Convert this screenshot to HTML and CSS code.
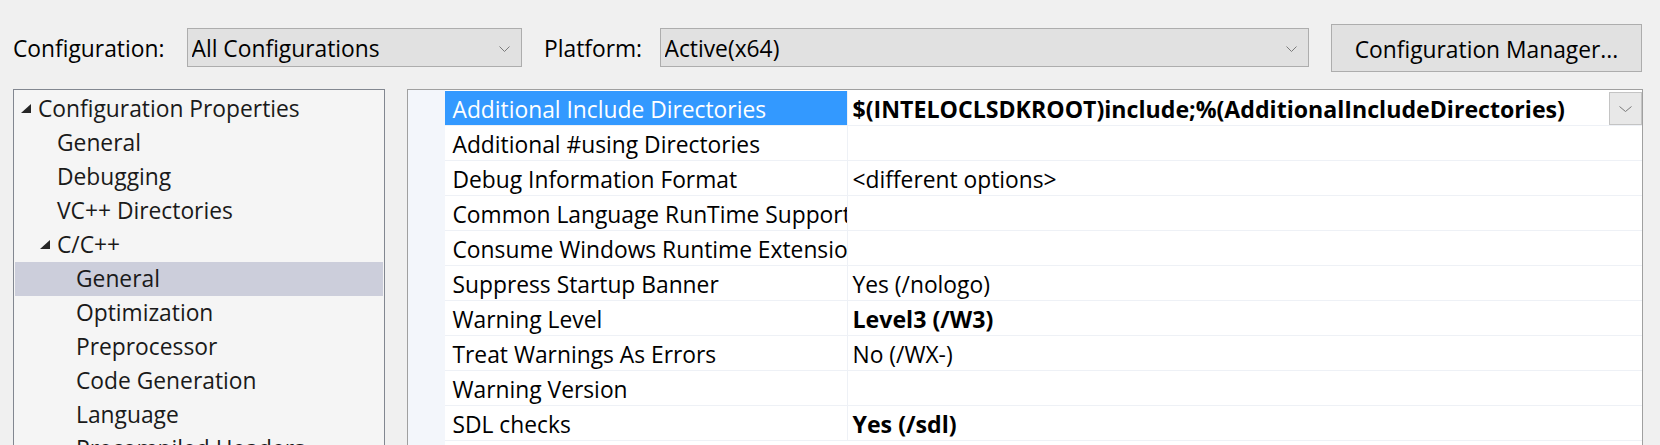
FILE: index.html
```html
<!DOCTYPE html>
<html lang="en">
<head>
<meta charset="utf-8">
<title>Property Pages</title>
<link rel="stylesheet" href="styles.css">
</head>
<body>
<div class="dialog">
  <div class="topbar">
    <span class="lbl lbl-config">Configuration:</span>
    <div class="combo combo-config">
      <span class="combo-text">All Configurations</span>
      <svg class="chev" width="11" height="6" viewBox="0 0 11 6"><polyline points="0.5,0.5 5.5,5.5 10.5,0.5" fill="none" stroke="#7a7a7a" stroke-width="1"/></svg>
    </div>
    <span class="lbl lbl-plat">Platform:</span>
    <div class="combo combo-plat">
      <span class="combo-text">Active(x64)</span>
      <svg class="chev" width="11" height="6" viewBox="0 0 11 6"><polyline points="0.5,0.5 5.5,5.5 10.5,0.5" fill="none" stroke="#7a7a7a" stroke-width="1"/></svg>
    </div>
    <button class="btn">Configuration Manager...</button>
  </div>

  <div class="panels">
    <div class="tree">
      <div class="node l0"><span class="exp"><svg class="tri" width="10" height="9" viewBox="0 0 10 9"><polygon points="0,9 10,9 10,0" fill="#262626"/></svg></span>Configuration Properties</div>
      <div class="node l1"><span class="exp"></span>General</div>
      <div class="node l1"><span class="exp"></span>Debugging</div>
      <div class="node l1"><span class="exp"></span>VC++ Directories</div>
      <div class="node l1"><span class="exp"><svg class="tri" width="10" height="9" viewBox="0 0 10 9"><polygon points="0,9 10,9 10,0" fill="#262626"/></svg></span>C/C++</div>
      <div class="node l2 selected"><span class="exp"></span>General</div>
      <div class="node l2"><span class="exp"></span>Optimization</div>
      <div class="node l2"><span class="exp"></span>Preprocessor</div>
      <div class="node l2"><span class="exp"></span>Code Generation</div>
      <div class="node l2"><span class="exp"></span>Language</div>
      <div class="node l2"><span class="exp"></span>Precompiled Headers</div>
    </div>

    <div class="grid">
      <div class="gutter"></div>
      <div class="rows">
        <div class="row selected">
          <div class="name">Additional Include Directories</div>
          <div class="val">
            <span class="val-text bold">$(INTELOCLSDKROOT)include;%(AdditionalIncludeDirectories)</span>
            <span class="ddbtn"><svg width="13" height="6" viewBox="0 0 13 6"><polyline points="0.5,0.5 6.5,5.5 12.5,0.5" fill="none" stroke="#7a7a7a" stroke-width="1"/></svg></span>
          </div>
        </div>
        <div class="row"><div class="name">Additional #using Directories</div><div class="val"><span class="val-text"></span></div></div>
        <div class="row"><div class="name">Debug Information Format</div><div class="val"><span class="val-text">&lt;different options&gt;</span></div></div>
        <div class="row"><div class="name">Common Language RunTime Support</div><div class="val"><span class="val-text"></span></div></div>
        <div class="row"><div class="name">Consume Windows Runtime Extension</div><div class="val"><span class="val-text"></span></div></div>
        <div class="row"><div class="name">Suppress Startup Banner</div><div class="val"><span class="val-text">Yes (/nologo)</span></div></div>
        <div class="row"><div class="name">Warning Level</div><div class="val"><span class="val-text bold">Level3 (/W3)</span></div></div>
        <div class="row"><div class="name">Treat Warnings As Errors</div><div class="val"><span class="val-text">No (/WX-)</span></div></div>
        <div class="row"><div class="name">Warning Version</div><div class="val"><span class="val-text"></span></div></div>
        <div class="row"><div class="name">SDL checks</div><div class="val"><span class="val-text bold">Yes (/sdl)</span></div></div>
      </div>
    </div>
  </div>
</div>
</body>
</html>
```
FILE: styles.css
```css
html, body {
  margin: 0;
  padding: 0;
  height: 445px;
  overflow: hidden;
}
body {
  background: #f0f0f0;
  font-family: "Open Sans", "Noto Sans", sans-serif;
  font-size: 22.8px;
  color: #000;
}
.dialog {
  width: 1660px;
}

/* ---------- top bar ---------- */
.topbar {
  display: flex;
  align-items: center;
  height: 48px;
  padding: 24px 0 0 13px;
}
.lbl {
  white-space: nowrap;
  flex: none;
  padding-top: 1px;
}
.lbl-config { width: 174px; }
.lbl-plat { width: 94px; margin-left: 22px; }
.combo {
  flex: none;
  box-sizing: border-box;
  height: 39px;
  margin-top: -1px;
  border: 1px solid #adadad;
  background: #e1e1e1;
  display: flex;
  align-items: center;
  padding-left: 3.5px;
  padding-right: 11px;
}
.combo-config { width: 335px; }
.combo-plat { width: 649px; margin-left: 22px; }
.combo-text {
  flex: 1;
  white-space: nowrap;
  overflow: hidden;
  padding-top: 1px;
}
.chev {
  flex: none;
  margin-top: 3px;
}
.btn {
  flex: none;
  box-sizing: border-box;
  width: 311px;
  height: 48px;
  margin-left: 22px;
  padding: 2px 0 0 0;
  border: 1px solid #adadad;
  background: #e1e1e1;
  font-family: inherit;
  font-size: inherit;
  color: #000;
  text-align: center;
}

/* ---------- panels ---------- */
.panels {
  display: flex;
  gap: 22px;
  margin-top: 17px;
  padding-left: 13px;
  height: 400px;
}

/* tree */
.tree {
  flex: none;
  box-sizing: border-box;
  width: 372px;
  border: 1px solid #828790;
  background: #f5f5f5;
  padding: 2px 1px 0 1px;
}
.node {
  height: 34px;
  line-height: 34px;
  white-space: nowrap;
  overflow: hidden;
  color: #1a1a1a;
}
.node.l0 { padding-left: 4px; }
.node.l1 { padding-left: 23px; }
.node.l2 { padding-left: 42px; }
.node.selected { background: #cccedb; }
.exp {
  display: inline-block;
  width: 19px;
}
.tri {
  margin-left: 2px;
  vertical-align: 4px;
}

/* property grid */
.grid {
  flex: none;
  box-sizing: border-box;
  width: 1236px;
  border: 1px solid #a0a0a0;
  background: #ffffff;
  display: flex;
}
.gutter {
  flex: none;
  width: 37px;
  background: #f3f6fb;
}
.rows {
  flex: 1;
  padding-top: 1px;
}
.row {
  display: flex;
  height: 34px;
  border-bottom: 1px solid #eef1f6;
}
.name {
  flex: none;
  box-sizing: border-box;
  width: 403px;
  padding-left: 7.5px;
  padding-top: 1px;
  border-right: 1px solid #eef1f6;
  line-height: 35px;
  white-space: nowrap;
  overflow: hidden;
}
.row.selected .name {
  background: #3399ff;
  color: #ffffff;
}
.val {
  flex: 1;
  display: flex;
  min-width: 0;
}
.val-text {
  flex: 1;
  padding-left: 4.5px;
  padding-top: 1px;
  line-height: 35px;
  white-space: nowrap;
  overflow: hidden;
}
.bold {
  font-weight: 700;
  font-size: 23.15px;
}
.ddbtn {
  flex: none;
  box-sizing: border-box;
  width: 33px;
  height: 33px;
  margin-top: 1px;
  border: 1px solid #c4c4c4;
  background: #e8e8e8;
  display: flex;
  align-items: center;
  justify-content: center;
}
```
